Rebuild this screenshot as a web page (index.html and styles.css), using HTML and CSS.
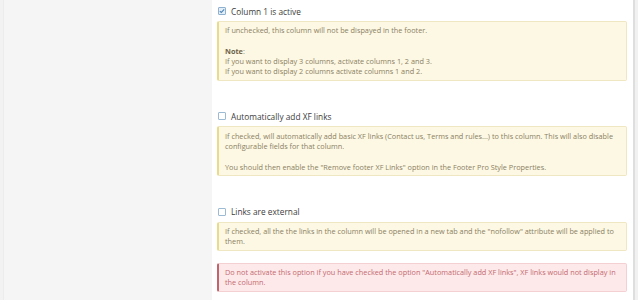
FILE: index.html
```html
<!DOCTYPE html>
<html>
<head>
<meta charset="utf-8">
<link rel="stylesheet" href="styles.css">
</head>
<body>
<div class="page">
  <div class="side"></div>
  <div class="main">
    <div class="opt first">
      <label class="chk">
        <span class="box checked"><svg viewBox="0 0 8 8" width="8" height="8"><path d="M1.8 4.1 L3.3 5.5 L6.2 2.4" fill="none" stroke="#4f86b5" stroke-width="1.1"/></svg></span>
        <span class="lbl">Column 1 is active</span>
      </label>
      <div class="msg warn">
        If unchecked, this column will not be dispayed in the footer.<br><br>
        <b>Note</b>:<br>
        If you want to display 3 columns, activate columns 1, 2 and 3.<br>
        If you want to display 2 columns activate columns 1 and 2.
      </div>
    </div>
    <div class="opt">
      <label class="chk">
        <span class="box"></span>
        <span class="lbl">Automatically add XF links</span>
      </label>
      <div class="msg warn">
        If checked, will automatically add basic XF links (Contact us, Terms and rules...) to this column. This will also disable configurable fields for that column.<br><br>
        You should then enable the "Remove footer XF Links" option in the Footer Pro Style Properties.
      </div>
    </div>
    <div class="opt">
      <label class="chk">
        <span class="box"></span>
        <span class="lbl">Links are external</span>
      </label>
      <div class="msg warn">
        If checked, all the the links in the column will be opened in a new tab and the "nofollow" attribute will be applied to them.
      </div>
      <div class="msg error">
        Do not activate this option if you have checked the option "Automatically add XF links", XF links would not display in the column.
      </div>
    </div>
  </div>
  <div class="edge"></div>
</div>
</body>
</html>
```

FILE: styles.css
```css
html, body {
  margin: 0;
  padding: 0;
  background: #ffffff;
}

.page {
  display: flex;
  height: 300px;
  overflow: hidden;
  font-family: "Open Sans", "Noto Sans", sans-serif;
}

.side {
  width: 209px;
  background: #f5f5f5;
  border-left: 3px solid #f2f2f2;
  box-shadow: inset 1px 0 0 #ececec;
  flex: none;
}

.main {
  flex: 1;
  min-width: 0;
  background: #ffffff;
  padding: 4px 6px 0 5px;
}

.edge {
  width: 3px;
  flex: none;
  background: #f1f1f1;
  border-left: 2px solid #dedede;
}

.opt {
  margin-top: 28.5px;
}

.opt.first {
  margin-top: 0;
}

.chk {
  display: flex;
  align-items: center;
  height: 14px;
  margin-bottom: 3px;
}

.box {
  width: 6px;
  height: 6px;
  border: 1px solid #9cbad3;
  background: #ffffff;
  border-radius: 1px;
  margin-left: 1px;
  margin-right: 5px;
  flex: none;
  display: flex;
  align-items: center;
  justify-content: center;
}

.box.checked {
  background: #e4eef7;
  border-color: #8fb1cf;
}

.box svg {
  flex: none;
  margin: -1px;
}

.lbl {
  font-size: 8.3px;
  color: #3c3c3c;
}

.msg {
  font-size: 7.3px;
  line-height: 10.3px;
  padding: 3.25px 6px 3.25px 6px;
  border: 1px solid #efe6c2;
  border-left: 2px solid #e7dc8c;
  border-radius: 2px;
}

.warn {
  background: #fdf8e4;
  color: #8a7f63;
}

.warn b {
  color: #6e6248;
}

.error {
  margin-top: 12px;
  background: #fde9e9;
  border-color: #f4d0d2;
  border-left-color: #c0656c;
  color: #c46a72;
}
```
